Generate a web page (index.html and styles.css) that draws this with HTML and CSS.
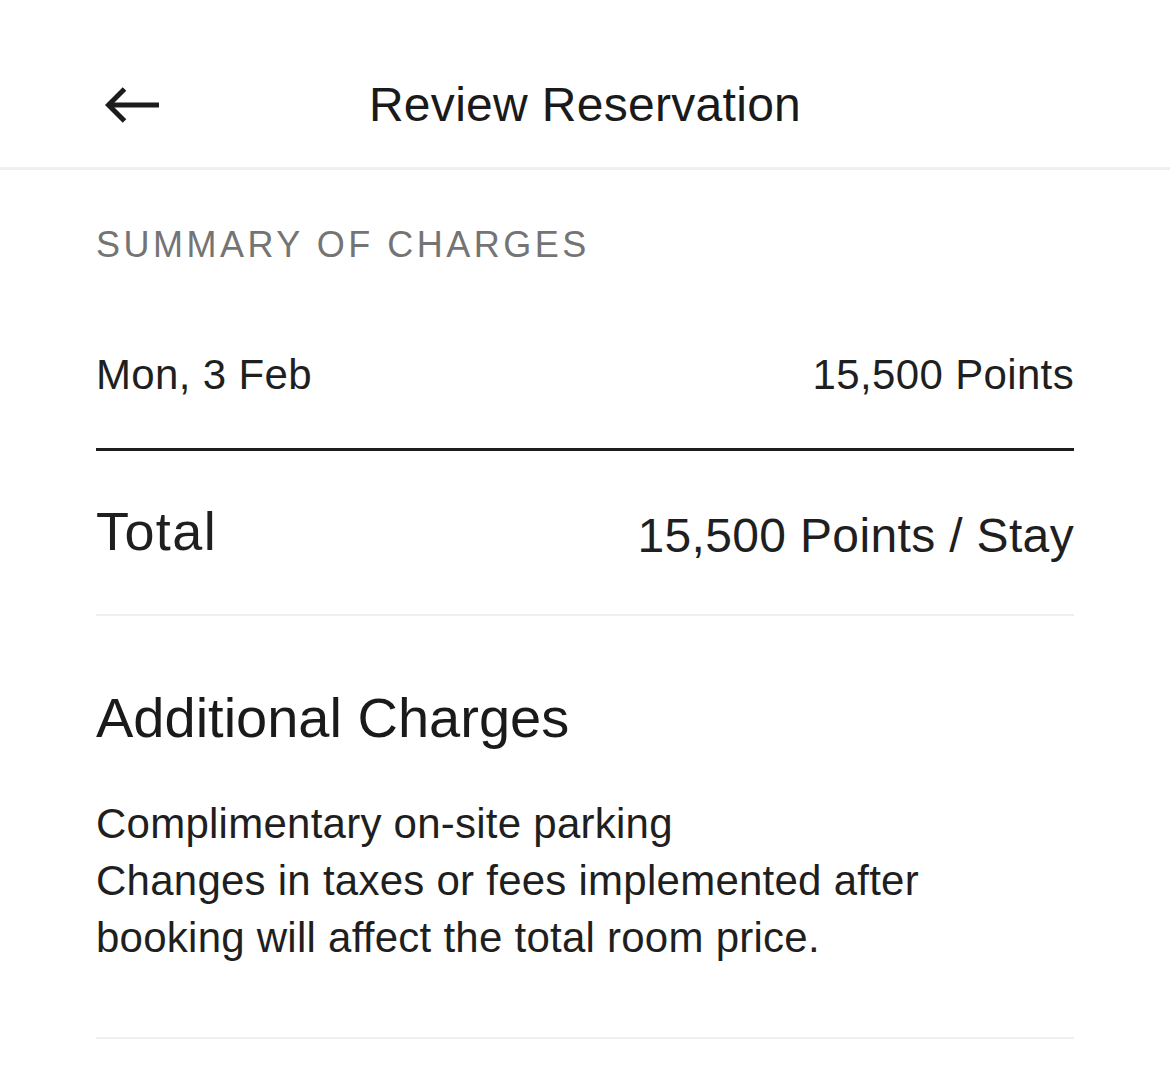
FILE: index.html
```html
<!DOCTYPE html>
<html lang="en">
<head>
<meta charset="utf-8">
<title>Review Reservation</title>
<link rel="stylesheet" href="styles.css">
</head>
<body>
<header class="topbar">
  <button class="back" aria-label="Back">
    <svg width="54" height="36" viewBox="0 0 54 36" fill="none" stroke="#1c1c1c" stroke-width="5">
      <path d="M5 18 H54"/>
      <path d="M19.5 2 L3.5 18 L19.5 34"/>
    </svg>
  </button>
  <h1 class="title">Review Reservation</h1>
  <span class="spacer"></span>
</header>
<main class="content">
  <h2 class="label">SUMMARY OF CHARGES</h2>
  <div class="row charge">
    <span>Mon, 3 Feb</span>
    <span>15,500 Points</span>
  </div>
  <div class="row total">
    <span class="total-label">Total</span>
    <span class="total-value">15,500 Points / Stay</span>
  </div>
  <section class="additional">
    <h3 class="add-title">Additional Charges</h3>
    <p class="add-text">Complimentary on-site parking<br>Changes in taxes or fees implemented after booking will affect the total room price.</p>
  </section>
</main>
</body>
</html>
```

FILE: styles.css
```css
html, body {
  margin: 0;
  padding: 0;
  background: #ffffff;
}
body {
  font-family: "Liberation Sans", Arial, Helvetica, sans-serif;
  color: #1f1f1f;
}
.topbar {
  box-sizing: border-box;
  height: 170px;
  padding: 42px 0 0 105px;
  border-bottom: 3px solid #efefef;
  display: grid;
  grid-template-columns: 1fr auto 1fr;
  align-items: center;
}
.back {
  justify-self: start;
  background: none;
  border: 0;
  padding: 0;
  margin: 0;
  width: 54px;
  height: 36px;
  display: block;
}
.back svg { display: block; }
.title {
  margin: 0 0 0 -105px;
  font-size: 48px;
  line-height: 48px;
  font-weight: 400;
  letter-spacing: 0.3px;
  color: #1a1a1a;
}
.content {
  padding: 53px 96px 0;
}
.label {
  margin: 0;
  font-size: 36px;
  line-height: 44px;
  font-weight: 400;
  letter-spacing: 3.5px;
  color: #747474;
}
.row {
  display: flex;
  justify-content: space-between;
  align-items: baseline;
}
.charge {
  margin-top: 83px;
  font-size: 42px;
  line-height: 50px;
  letter-spacing: 0.35px;
  padding-bottom: 48px;
  border-bottom: 3px solid #1e1e1e;
}
.total {
  padding-top: 48px;
  padding-bottom: 48px;
  border-bottom: 2px solid #efefef;
  line-height: 64px;
}
.total-label {
  font-size: 54px;
  letter-spacing: 1.4px;
}
.total-value {
  font-size: 48px;
  letter-spacing: 0.35px;
  position: relative;
  top: 2px;
}
.additional {
  padding-top: 69px;
  padding-bottom: 71px;
  border-bottom: 2px solid #efefef;
}
.add-title {
  margin: 0;
  font-size: 56px;
  line-height: 66px;
  font-weight: 400;
  color: #1a1a1a;
}
.add-text {
  margin: 44px 0 0;
  font-size: 42px;
  line-height: 57px;
  letter-spacing: 0.25px;
  color: #1f1f1f;
}
```
